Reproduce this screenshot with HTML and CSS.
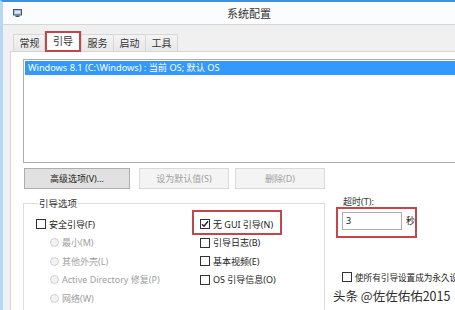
FILE: index.html
```html
<!DOCTYPE html>
<html lang="zh">
<head>
  <meta charset="UTF-8">
  <title>系统配置</title>
  <link rel="stylesheet" href="styles.css">
</head>
<body>
  <div class="frame">
    <div class="titlebar">
      <svg class="app-icon" width="9" height="8" viewBox="0 0 9 8">
        <rect x="0.5" y="0.5" width="8" height="5.5" fill="#9fc1e4" stroke="#44566e"/>
        <rect x="2" y="2" width="5" height="2.5" fill="#dfeaf5"/>
        <rect x="2.5" y="6.5" width="4" height="1.5" fill="#44566e"/>
      </svg>
      <span class="title">系统配置</span>
    </div>

    <div class="client">
      <div class="tabs">
        <div class="tab">常规</div>
        <div class="tab active">引导</div>
        <div class="tab">服务</div>
        <div class="tab">启动</div>
        <div class="tab">工具</div>
      </div>

      <div class="panel">
        <div class="listbox">
          <div class="entry selected">Windows 8.1 (C:\Windows) : 当前 OS; 默认 OS</div>
        </div>

        <div class="btnrow">
          <button class="btn btn-adv">高级选项(V)...</button>
          <button class="btn btn-def" disabled>设为默认值(S)</button>
          <button class="btn btn-del" disabled>删除(D)</button>
        </div>

        <div class="lower">
          <fieldset class="group">
            <legend>引导选项</legend>
            <div class="opts">
              <div class="col">
                <div class="row"><span class="cb"></span>安全引导(F)</div>
                <div class="row sub dis"><span class="rb"></span>最小(M)</div>
                <div class="row sub dis"><span class="rb"></span>其他外壳(L)</div>
                <div class="row sub dis"><span class="rb"></span>Active Directory 修复(P)</div>
                <div class="row sub dis"><span class="rb"></span>网络(W)</div>
              </div>
              <div class="col">
                <div class="row marked">
                  <span class="cb">
                    <svg width="8" height="8" viewBox="0 0 8 8"><path d="M1 4.2 L3 6.3 L7 1.3" fill="none" stroke="#222" stroke-width="1.4"/></svg>
                  </span>无 GUI 引导(N)
                </div>
                <div class="row"><span class="cb"></span>引导日志(B)</div>
                <div class="row"><span class="cb"></span>基本视频(E)</div>
                <div class="row"><span class="cb"></span>OS 引导信息(O)</div>
              </div>
            </div>
          </fieldset>

          <div class="side">
            <div class="timeout-label">超时(T):</div>
            <div class="timeout-box">
              <span class="input">3</span>
              <span class="unit">秒</span>
            </div>
            <div class="row perm"><span class="cb"></span>使所有引导设置成为永久设置(K)</div>
          </div>
        </div>
      </div>
    </div>
  </div>

  <div class="watermark">头条 @佐佐佑佑2015</div>
</body>
</html>
```

FILE: styles.css
```css
body {
  margin: 0;
  width: 455px;
  height: 310px;
  overflow: hidden;
  position: relative;
  background: #f0f0f0;
  font-family: "Noto Sans", "Noto Sans CJK SC", sans-serif;
  font-size: 9px;
  color: #222;
}

.frame {
  width: 520px;
  height: 310px;
  border-top: 2px solid #3f8fdc;
  border-left: 3px solid #b5d9f2;
  display: flex;
  flex-direction: column;
  box-sizing: border-box;
}

.titlebar {
  height: 22px;
  flex: none;
  display: flex;
  align-items: center;
  background: #fbfcfd;
  border-bottom: 1px solid #d6d6d6;
}
.app-icon {
  margin-left: 10px;
}
.title {
  margin-left: 205px;
  font-size: 11px;
  color: #333;
}

.client {
  flex: 1;
  display: flex;
  flex-direction: column;
  padding: 6px 0 0 7px;
  background: #f0f0f0;
}

/* tabs */
.tabs {
  display: flex;
  align-items: flex-end;
  padding-left: 3px;
  height: 20px;
  position: relative;
  z-index: 1;
}
.tab {
  width: 33px;
  height: 17px;
  box-sizing: border-box;
  border: 1px solid #d6d6d6;
  border-bottom: none;
  margin-right: -1px;
  background: linear-gradient(#f4f4f4, #e8e8e8);
  font-size: 10px;
  line-height: 16px;
  text-align: center;
  color: #333;
}
.tab.active {
  width: 38px;
  height: 21px;
  margin: 0 -1px -1px -1px;
  background: #fff;
  position: relative;
  line-height: 19px;
}
.tab.active::after {
  content: "";
  position: absolute;
  inset: -1px 0 0 0;
  border: 2px solid #c2474b;
}

.panel {
  flex: 1;
  background: #fff;
  border-top: 1px solid #d6d6d6;
  border-left: 1px solid #d6d6d6;
  padding: 7px 0 0 12px;
}

.listbox {
  height: 104px;
  box-sizing: border-box;
  border: 1px solid #abadb3;
  border-right: none;
  padding: 1px;
}
.entry {
  height: 14px;
  line-height: 14px;
  padding-left: 3px;
  font-size: 9.2px;
  white-space: nowrap;
}
.entry.selected {
  background: #3399ff;
  color: #fff;
}

.btnrow {
  display: flex;
  margin-top: 5px;
  padding-left: 1px;
}
.btn {
  height: 21px;
  font-family: inherit;
  font-size: 9px;
  border: 1px solid #adadad;
  background: #e1e1e1;
  color: #222;
  padding: 0;
}
.btn:disabled {
  border-color: #d9d9d9;
  background: #f4f4f4;
  color: #a0a0a0;
}
.btn-adv { width: 106px; }
.btn-def { width: 90px; margin-left: 9px; }
.btn-del { width: 90px; margin-left: 6px; }

.lower {
  display: flex;
  margin-top: 8px;
}

.group {
  width: 302px;
  height: 200px;
  box-sizing: border-box;
  margin: 0;
  padding: 5px 0 0 12px;
  border: 1px solid #dcdcdc;
  border-bottom: none;
}
.group legend {
  padding: 0 1px;
  margin-left: 2px;
  font-size: 9.5px;
  line-height: 13px;
  color: #333;
}

.opts {
  display: grid;
  grid-template-columns: 164px auto;
}

.row {
  display: flex;
  align-items: center;
  height: 18.5px;
  white-space: nowrap;
}
.row.sub {
  padding-left: 14px;
}
.row.dis {
  color: #a0a0a0;
}

.cb {
  width: 10px;
  height: 10px;
  box-sizing: border-box;
  border: 1px solid #333;
  background: #fff;
  margin-right: 3px;
  display: flex;
  align-items: center;
  justify-content: center;
  flex: none;
}
.rb {
  width: 9px;
  height: 9px;
  box-sizing: border-box;
  border: 1px solid #cfcfcf;
  border-radius: 50%;
  background: #f2f2f2;
  margin-right: 3px;
  flex: none;
}

.row.marked {
  position: relative;
  width: max-content;
}
.row.marked::after {
  content: "";
  position: absolute;
  inset: -5px -9px -1px -8px;
  border: 2px solid #c2474b;
}

.side {
  margin-left: 11px;
  display: flex;
  flex-direction: column;
  align-items: flex-start;
}
.timeout-label {
  padding-left: 7px;
  line-height: 10px;
  color: #333;
}
.timeout-box {
  width: 81px;
  height: 31px;
  box-sizing: border-box;
  border: 2px solid #c2474b;
  padding: 3px 0 0 4px;
  display: flex;
  align-items: flex-start;
}
.input {
  width: 60px;
  height: 18px;
  box-sizing: border-box;
  border: 1px solid #abadb3;
  padding-left: 3px;
  line-height: 16px;
}
.unit {
  margin-left: 4px;
  line-height: 18px;
}
.row.perm {
  margin-top: 30px;
  padding-left: 6px;
  font-size: 8.6px;
}

.watermark {
  position: absolute;
  left: 333px;
  top: 286px;
  font-family: "Noto Sans CJK SC", sans-serif;
  font-size: 12.5px;
  color: #2b2b2b;
  text-shadow: 0 0 2px #fff, 0 0 2px #fff;
  white-space: nowrap;
}
```
